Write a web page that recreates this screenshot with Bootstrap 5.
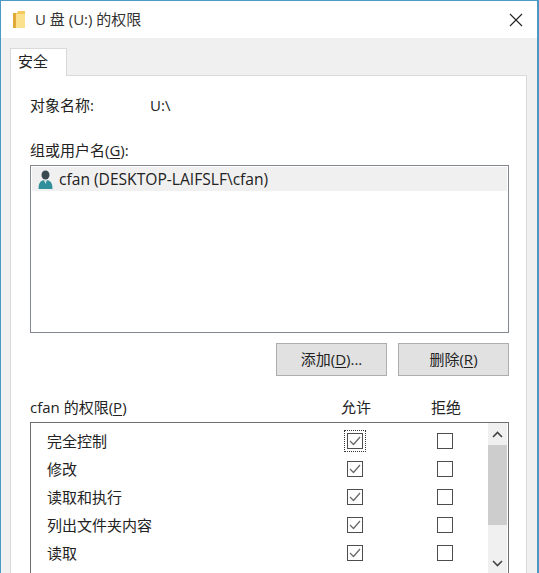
<!DOCTYPE html>
<html lang="zh">
<head>
<meta charset="utf-8">
<title>U 盘 (U:) 的权限</title>
<link rel="stylesheet" href="https://cdn.jsdelivr.net/npm/bootstrap@5.3.0/dist/css/bootstrap.min.css">
<style>
html,body{height:573px;overflow:hidden;background:#f0f0f0}
body{font-family:"Open Sans","Noto Sans CJK SC",sans-serif;font-size:15px;line-height:20px;color:#222}
.win-frame{height:573px;border:solid #4a9ac4;border-width:1px 2px 0 1px;background:#f0f0f0}
.win-title{height:37px;background:#fff;padding:0 14px 0 12px}
.win-title-text{margin-left:9px;color:#333;padding-bottom:2px}
.win-body{padding:10px 10px 0 9px}
.win-tabs{height:28px;margin-bottom:-1px;position:relative;z-index:1}
.win-tab{width:57px;height:28px;background:#fff;border:1px solid #d9d9d9;border-bottom:0;padding:2px 0 0 7px}
.win-panel{height:498px;background:#fff;border:1px solid #d9d9d9;border-bottom:0;padding:19px 17px 0 19px}
.obj-row{height:20px}
.obj-label{width:120px}
.group-label{margin-top:25px;height:20px}
.user-box{margin-top:5px;height:168px;border:1px solid #828790;padding:1px;background:#fff}
.user-row{height:24px;background:#f0f0f0;padding-left:6px;gap:6px}
.lat{font-size:15.6px}
.act-row{margin-top:10px;gap:11px}
.act-btn{width:111px;height:33px;padding:0 0 2px;background:#e1e1e1;border:1px solid #adadad;border-radius:0;font-size:15px;line-height:20px;color:#222}
.perm-head{margin-top:21px;height:25px}
.perm-name{flex:1}
.perm-col{width:90px;text-align:center}
.perm-spacer{width:18px}
.perm-box{height:151px;border:1px solid #6e6e6e;border-bottom:0;padding-top:4px;position:relative;overflow:hidden}
.perm-row{height:28px;padding-left:16px}
.tick{width:16px;height:16px;border:1px solid #4d4d4d;background:#fff;display:flex;align-items:center;justify-content:center}
.tick-cell{width:90px;display:flex;justify-content:center}
.tick-focus{outline:1px dotted #333;outline-offset:2px}
.perm-scroll{position:absolute;top:0;right:1px;width:19px;height:151px;background:#f0f0f0}
.perm-thumb{position:absolute;top:22px;left:0;width:19px;height:80px;background:#cdcdcd}
.perm-up{position:absolute;top:8px;left:4px}
.perm-down{position:absolute;top:137px;left:4px}
u{text-underline-offset:2px}
</style>
</head>
<body>
<div class="win-frame">
  <div class="win-title d-flex align-items-center">
    <svg width="13" height="17" viewBox="0 0 13 17"><path d="M0 2h4l1-2h7v17H1z" fill="#f4c95d"/><path d="M3 3h9v14H3z" fill="#fbe08e"/><path d="M0 2h3v15H0z" fill="#e0a93a"/></svg>
    <span class="win-title-text">U 盘 (U:) 的权限</span>
    <svg class="ms-auto" width="14" height="14" viewBox="0 0 14 14"><path d="M1 1l12 12M13 1L1 13" stroke="#222" stroke-width="1.1" fill="none"/></svg>
  </div>
  <div class="win-body">
    <div class="win-tabs d-flex"><div class="win-tab">安全</div></div>
    <div class="win-panel">
      <div class="obj-row d-flex"><span class="obj-label">对象名称:</span><span>U:\</span></div>
      <div class="group-label">组或用户名(<u>G</u>):</div>
      <div class="user-box">
        <div class="user-row d-flex align-items-center">
          <svg width="15" height="19" viewBox="0 0 15 19"><ellipse cx="7.5" cy="5" rx="4" ry="4.6" fill="#3a4a50"/><path d="M0.500 19c0-6 2-9 7-9s7 3 7 9z" fill="#2f8f9a"/><path d="M6 10h3l-1.500 4z" fill="#d9e6e6"/></svg>
          <span class="lat">cfan (DESKTOP-LAIFSLF\cfan)</span>
        </div>
      </div>
      <div class="act-row d-flex justify-content-end">
        <button type="button" class="btn act-btn">添加(<u>D</u>)...</button>
        <button type="button" class="btn act-btn">删除(<u>R</u>)</button>
      </div>
      <div class="perm-head d-flex">
        <span class="perm-name">cfan 的权限(<u>P</u>)</span>
        <span class="perm-col">允许</span><span class="perm-col">拒绝</span><span class="perm-spacer"></span>
      </div>
      <div class="perm-box">
        <div class="perm-row d-flex align-items-center">
          <span class="perm-name">完全控制</span>
          <span class="tick-cell"><span class="tick tick-focus"><svg width="12" height="10" viewBox="0 0 12 10"><path d="M1 5l3.500 3.500L11 1" stroke="#666" stroke-width="1.2" fill="none"/></svg></span></span>
          <span class="tick-cell"><span class="tick"></span></span><span class="perm-spacer"></span>
        </div>
        <div class="perm-row d-flex align-items-center">
          <span class="perm-name">修改</span>
          <span class="tick-cell"><span class="tick"><svg width="12" height="10" viewBox="0 0 12 10"><path d="M1 5l3.500 3.500L11 1" stroke="#666" stroke-width="1.2" fill="none"/></svg></span></span>
          <span class="tick-cell"><span class="tick"></span></span><span class="perm-spacer"></span>
        </div>
        <div class="perm-row d-flex align-items-center">
          <span class="perm-name">读取和执行</span>
          <span class="tick-cell"><span class="tick"><svg width="12" height="10" viewBox="0 0 12 10"><path d="M1 5l3.500 3.500L11 1" stroke="#666" stroke-width="1.2" fill="none"/></svg></span></span>
          <span class="tick-cell"><span class="tick"></span></span><span class="perm-spacer"></span>
        </div>
        <div class="perm-row d-flex align-items-center">
          <span class="perm-name">列出文件夹内容</span>
          <span class="tick-cell"><span class="tick"><svg width="12" height="10" viewBox="0 0 12 10"><path d="M1 5l3.500 3.500L11 1" stroke="#666" stroke-width="1.2" fill="none"/></svg></span></span>
          <span class="tick-cell"><span class="tick"></span></span><span class="perm-spacer"></span>
        </div>
        <div class="perm-row d-flex align-items-center">
          <span class="perm-name">读取</span>
          <span class="tick-cell"><span class="tick"><svg width="12" height="10" viewBox="0 0 12 10"><path d="M1 5l3.500 3.500L11 1" stroke="#666" stroke-width="1.2" fill="none"/></svg></span></span>
          <span class="tick-cell"><span class="tick"></span></span><span class="perm-spacer"></span>
        </div>
        <div class="perm-scroll">
          <svg class="perm-up" width="11" height="7" viewBox="0 0 11 7"><path d="M1 6l4.500-4.500L10 6" stroke="#444" stroke-width="1.6" fill="none"/></svg>
          <div class="perm-thumb"></div>
          <svg class="perm-down" width="11" height="7" viewBox="0 0 11 7"><path d="M1 1l4.500 4.500L10 1" stroke="#444" stroke-width="1.6" fill="none"/></svg>
        </div>
      </div>
    </div>
  </div>
</div>
<script src="https://cdn.jsdelivr.net/npm/bootstrap@5.3.0/dist/js/bootstrap.bundle.min.js"></script>
</body>
</html>
